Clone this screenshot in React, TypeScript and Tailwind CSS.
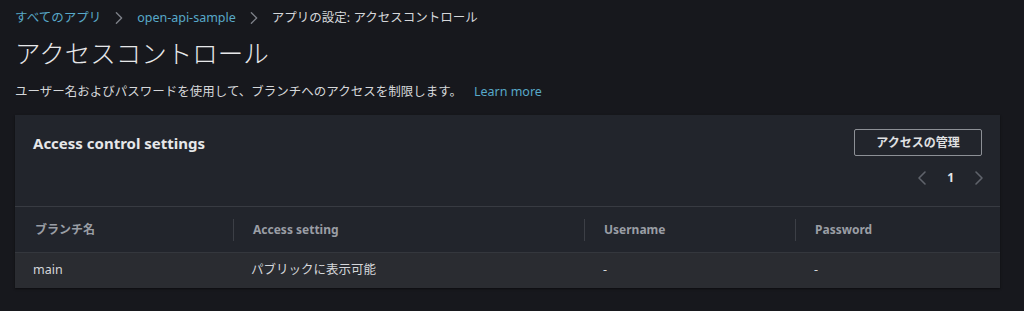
import React from 'react';

const columns = ['ブランチ名', 'Access setting', 'Username', 'Password'];

const rows = [
  { branch: 'main', access: 'パブリックに表示可能', username: '-', password: '-' }
];

const Chevron = ({ dir, className }: { dir: 'left' | 'right'; className?: string }) => (
  <svg width="10" height="16" viewBox="0 0 10 16" className={className} fill="none">
    <path
      d={dir === 'left' ? 'M8 2L2 8l6 6' : 'M2 2l6 6-6 6'}
      stroke="currentColor"
      strokeWidth="1.6"
      strokeLinecap="round"
      strokeLinejoin="round"
    />
  </svg>
);

const App = () => {
  return (
    <div
      className="min-h-[311px] w-full bg-[#17181d] px-[15px] pt-[9px] text-[#d5d7da]"
      style={{ fontFamily: '"Noto Sans", "Noto Sans CJK JP", sans-serif' }}
    >
      {/* Breadcrumb */}
      <nav className="flex h-[18px] items-center text-[12.5px] leading-none">
        <span className="text-[#58a9c9]">すべてのアプリ</span>
        <Chevron dir="right" className="mx-[13px] h-[14px] text-[#7d8088]" />
        <span className="text-[#58a9c9]">open-api-sample</span>
        <Chevron dir="right" className="mx-[13px] h-[14px] text-[#7d8088]" />
        <span className="text-[#d5d7da]">アプリの設定: アクセスコントロール</span>
      </nav>

      {/* Title */}
      <h1 className="mt-[11px] text-[25.5px] font-light leading-[30px] text-[#e6e7e9]">
        アクセスコントロール
      </h1>

      {/* Description */}
      <p className="mt-[15px] text-[12.5px] leading-[18px] text-[#d5d7da]">
        ユーザー名およびパスワードを使用して、ブランチへのアクセスを制限します。
        <span className="ml-[12px] text-[#58a9c9]">Learn more</span>
      </p>

      {/* Card */}
      <div className="mt-[14px] w-[985px] bg-[#22252c] shadow-[0_1px_2px_rgba(0,0,0,0.5)]">
        <div className="flex items-start justify-between px-[18px] pt-[14px] pb-[19px]">
          <h2 className="mt-[4px] text-[15px] font-bold leading-[20px] text-[#e6e7e9]">
            Access control settings
          </h2>
          <div className="flex flex-col items-end">
            <button className="h-[27px] w-[128px] rounded-[2px] border border-[#8d9096] text-[12px] font-bold text-[#e0e1e3]">
              アクセスの管理
            </button>
            <div className="mt-[13px] mr-[-2px] flex items-center gap-[20px]">
              <Chevron dir="left" className="text-[#5f636b]" />
              <span className="text-[12px] font-bold text-[#e6e7e9]">1</span>
              <Chevron dir="right" className="text-[#5f636b]" />
            </div>
          </div>
        </div>

        {/* Table */}
        <div className="border-t border-[#383b42]">
          <div className="grid h-[45px] grid-cols-[218px_351px_211px_1fr] items-center">
            {columns.map((col, i) => (
              <div
                key={col}
                className={
                  i === 0
                    ? 'pl-[20px] text-[12px] font-bold text-[#9a9ea5]'
                    : 'flex h-[22px] items-center border-l border-[#3c3f46] pl-[19px] text-[12px] font-bold text-[#9a9ea5]'
                }
              >
                {col}
              </div>
            ))}
          </div>
          {rows.map(row => (
            <div
              key={row.branch}
              className="grid h-[36px] grid-cols-[218px_351px_211px_1fr] items-center border-t border-[#34373d] bg-[#2a2c31] text-[12.5px] text-[#d5d7da]"
            >
              <div className="pl-[18px]">{row.branch}</div>
              <div className="pl-[18px]">{row.access}</div>
              <div className="pl-[19px]">{row.username}</div>
              <div className="pl-[19px]">{row.password}</div>
            </div>
          ))}
        </div>
      </div>
    </div>
  );
};

export default App;
